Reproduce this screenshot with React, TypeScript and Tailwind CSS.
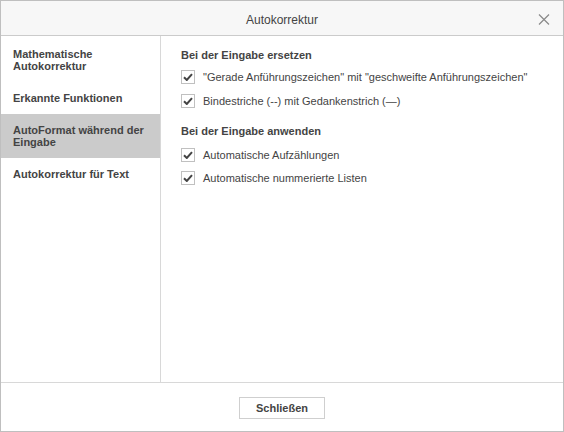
import React from 'react';

const font = { fontFamily: '"Liberation Sans", Arial, sans-serif' };

const sections = [
  { label: ['Mathematische', 'Autokorrektur'] },
  { label: ['Erkannte Funktionen'] },
  { label: ['AutoFormat während der', 'Eingabe'], active: true },
  { label: ['Autokorrektur für Text'] },
];

function Check({ label }: { label: string }) {
  return (
    <div className="flex h-[14px] items-center">
      <span className="flex h-[14px] w-[14px] items-center justify-center border border-[#c0c0c0] bg-white">
        <svg width="10" height="8" viewBox="0 0 10 8" fill="none">
          <path d="M1 4.2 L3.8 7 L9 1.2" stroke="#444" strokeWidth="2" />
        </svg>
      </span>
      <span className="ml-[8px] text-[11px] leading-[14px] text-[#444]">{label}</span>
    </div>
  );
}

export default function App() {
  return (
    <div style={font} className="flex h-[432px] w-[564px] flex-col border border-[#bfbfbf] bg-white text-[#444]">
      {/* Header */}
      <div className="relative flex h-[35px] shrink-0 items-center justify-center border-b border-[#cbcbcb] bg-[#f7f7f7] pt-[3px]">
        <span className="text-[12px]">Autokorrektur</span>
        <svg className="absolute right-[13px] top-[13px]" width="12" height="11" viewBox="0 0 12 11">
          <path d="M1 0.5 L11 10.5 M11 0.5 L1 10.5" stroke="#8a8a8a" strokeWidth="1.2" />
        </svg>
      </div>

      {/* Body */}
      <div className="flex flex-1">
        <div className="w-[160px] shrink-0 border-r border-[#d8d8d8] pt-[2px]">
          {sections.map((s, i) => (
            <div
              key={i}
              className={`px-[12px] py-[10px] text-[11px] font-bold leading-[12px] ${s.active ? 'bg-[#cbcbcb]' : ''}`}
            >
              {s.label.map((l) => (
                <div key={l}>{l}</div>
              ))}
            </div>
          ))}
        </div>

        <div className="flex-1 pl-[20px] pt-[12px]">
          <div className="text-[11px] font-bold leading-[14px]">Bei der Eingabe ersetzen</div>
          <div className="mt-[8px] flex flex-col gap-[10px]">
            <Check label={'"Gerade Anführungszeichen" mit "geschweifte Anführungszeichen"'} />
            <Check label="Bindestriche (--) mit Gedankenstrich (—)" />
          </div>
          <div className="mt-[16px] text-[11px] font-bold leading-[14px]">Bei der Eingabe anwenden</div>
          <div className="mt-[10px] flex flex-col gap-[9px]">
            <Check label="Automatische Aufzählungen" />
            <Check label="Automatische nummerierte Listen" />
          </div>
        </div>
      </div>

      {/* Footer */}
      <div className="flex h-[49px] shrink-0 justify-center border-t border-[#d8d8d8] pt-[14px]">
        <button className="h-[22px] w-[86px] border border-[#cfcfcf] bg-white text-[11px] font-bold text-[#444]">
          Schließen
        </button>
      </div>
    </div>
  );
}
